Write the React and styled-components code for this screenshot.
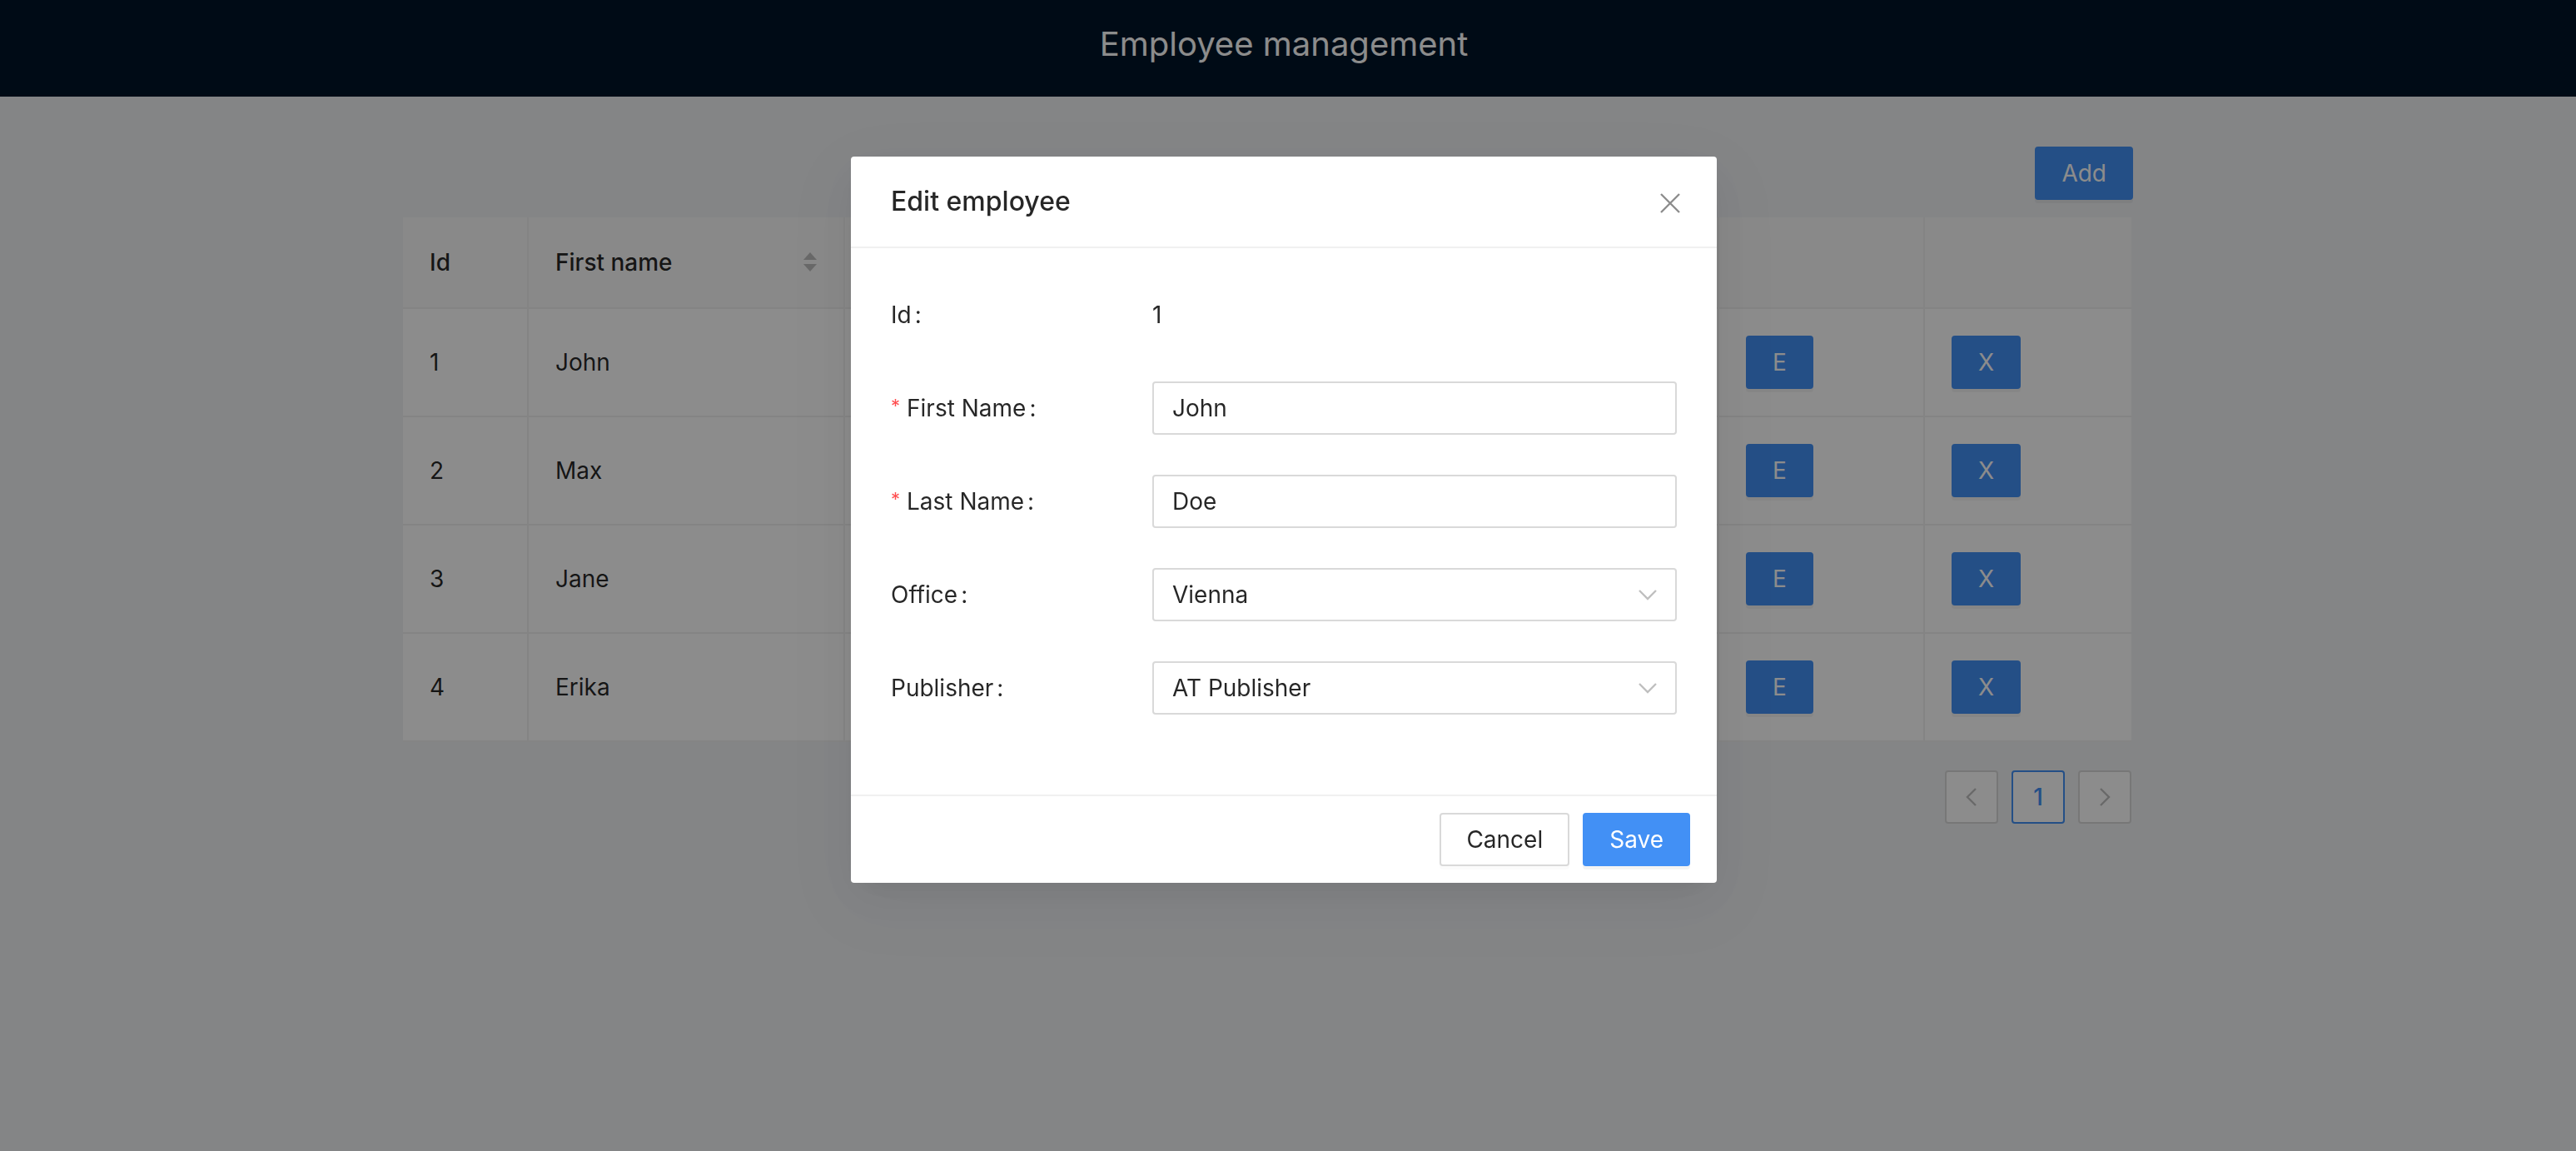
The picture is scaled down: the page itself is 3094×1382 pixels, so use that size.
import styled, { createGlobalStyle } from "styled-components";

const GlobalStyle = createGlobalStyle`
  html, body {
    margin: 0;
    padding: 0;
  }
  body {
    font-family: Inter, "Noto Sans", sans-serif;
    font-size: 28px;
    line-height: 44px;
    color: rgba(0, 0, 0, 0.85);
    background: #f0f2f5;
  }
  * {
    box-sizing: border-box;
  }
`;

const PRIMARY = "#4290f5";

const Header = styled.header`
  height: 116px;
  background: #001529;
  display: flex;
  align-items: center;
  justify-content: center;
  padding: 0 10px 10px 0;
`;

const Title = styled.h1`
  margin: 0;
  color: #fff;
  font-weight: 400;
  font-size: 40px;
  line-height: 1.2;
`;

const Content = styled.main`
  width: 2076px;
  margin-left: 484px;
  padding-top: 60px;
`;

const Toolbar = styled.div`
  display: flex;
  justify-content: flex-end;
  margin: 0 -2px 21px 0;
`;

const Button = styled.button`
  height: 64px;
  padding: 0 30px;
  font-family: inherit;
  font-size: 28px;
  line-height: 44px;
  border-radius: 4px;
  border: 2px solid ${(p) => (p.$primary ? PRIMARY : "#d9d9d9")};
  background: ${(p) => (p.$primary ? PRIMARY : "#fff")};
  color: ${(p) => (p.$primary ? "#fff" : "rgba(0, 0, 0, 0.85)")};
  box-shadow: 0 4px 0 rgba(0, 0, 0, ${(p) => (p.$primary ? 0.045 : 0.015)});
  cursor: pointer;
`;

const Table = styled.table`
  width: 100%;
  table-layout: fixed;
  border-collapse: separate;
  border-spacing: 0;
  background: #fff;
`;

const Th = styled.th`
  background: #fafafa;
  font-weight: 500;
  text-align: left;
  padding: 32px;
  border-right: 2px solid #f0f0f0;
  border-bottom: 2px solid #f0f0f0;
  &:last-child {
    border-right: none;
  }
`;

const Td = styled.td`
  height: 130px;
  padding: 32px;
  vertical-align: middle;
  border-right: 2px solid #f0f0f0;
  border-bottom: 2px solid #f0f0f0;
  &:last-child {
    border-right: none;
  }
`;

const SortCell = styled.div`
  display: flex;
  align-items: center;
  justify-content: space-between;
`;

const Pager = styled.ul`
  list-style: none;
  display: flex;
  justify-content: flex-end;
  gap: 16px;
  margin: 34px 0 0;
  padding: 0;
`;

const PageItem = styled.li`
  width: 64px;
  height: 64px;
  display: flex;
  align-items: center;
  justify-content: center;
  border: 2px solid ${(p) => (p.$active ? PRIMARY : "#d9d9d9")};
  border-radius: 4px;
  background: #fff;
  color: ${(p) => (p.$active ? PRIMARY : "rgba(0, 0, 0, 0.25)")};
  font-weight: ${(p) => (p.$active ? 500 : 400)};
`;

const Overlay = styled.div`
  position: fixed;
  inset: 0;
  background: rgba(0, 0, 0, 0.45);
`;

const ModalWrap = styled.div`
  position: fixed;
  inset: 0;
  padding-right: 10px;
  overflow: auto;
`;

const Modal = styled.div`
  position: relative;
  width: 1040px;
  margin: 188px auto 0;
  background: #fff;
  border-radius: 4px;
  box-shadow: 0 12px 32px -16px rgba(0, 0, 0, 0.08),
    0 18px 56px 0 rgba(0, 0, 0, 0.05), 0 24px 96px 32px rgba(0, 0, 0, 0.03);
`;

const ModalHeader = styled.div`
  padding: 32px 48px;
  border-bottom: 2px solid #f0f0f0;
`;

const ModalTitle = styled.div`
  font-size: 32px;
  line-height: 44px;
  font-weight: 500;
`;

const Close = styled.button`
  position: absolute;
  top: 0;
  right: 0;
  width: 112px;
  height: 112px;
  display: flex;
  align-items: center;
  justify-content: center;
  border: none;
  background: transparent;
  padding: 0;
  cursor: pointer;
`;

const ModalBody = styled.div`
  padding: 48px;
`;

const FormItem = styled.div`
  display: grid;
  grid-template-columns: 314px 1fr;
  align-items: center;
  margin-bottom: 48px;
`;

const Label = styled.label`
  display: flex;
  align-items: center;
  height: 64px;
  white-space: nowrap;
  &::after {
    content: ":";
    margin: 0 16px 0 4px;
  }
`;

const Required = styled.span`
  color: #ff4d4f;
  font-size: 22px;
  line-height: 1;
  margin-right: 8px;
  align-self: flex-start;
  margin-top: 18px;
`;

const Value = styled.div`
  line-height: 64px;
`;

const Input = styled.input`
  width: 100%;
  height: 64px;
  padding: 0 22px;
  border: 2px solid #d9d9d9;
  border-radius: 4px;
  font-family: inherit;
  font-size: 28px;
  color: rgba(0, 0, 0, 0.85);
  background: #fff;
  outline: none;
`;

const Select = styled.div`
  height: 64px;
  padding: 0 22px;
  border: 2px solid #d9d9d9;
  border-radius: 4px;
  display: flex;
  align-items: center;
  justify-content: space-between;
  background: #fff;
`;

const ModalFooter = styled.div`
  border-top: 2px solid #f0f0f0;
  padding: 20px 32px;
  display: flex;
  justify-content: flex-end;
  gap: 16px;
`;

// only the columns left and right of the dialog are visible
const employees = [
  { id: 1, first: "John" },
  { id: 2, first: "Max" },
  { id: 3, first: "Jane" },
  { id: 4, first: "Erika" },
];

function SortIcon() {
  return (
    <svg width="16" height="26" viewBox="0 0 16 26">
      <polygon points="0,10 8,1 16,10" fill="#bfbfbf" />
      <polygon points="0,15 16,15 8,24" fill="#bfbfbf" />
    </svg>
  );
}

function Chevron({ dir = "down", color = "#bfbfbf" }) {
  const points = {
    down: "1,2 11,12 21,2",
    left: "12,1 2,11 12,21",
    right: "2,1 12,11 2,21",
  }[dir];
  const size = dir === "down" ? [22, 14] : [14, 22];
  return (
    <svg width={size[0]} height={size[1]} viewBox={`0 0 ${size[0]} ${size[1]}`}>
      <polyline points={points} fill="none" stroke={color} strokeWidth="2.4" />
    </svg>
  );
}

export default function App() {
  return (
    <>
      <GlobalStyle />
      <Header>
        <Title>Employee management</Title>
      </Header>
      <Content>
        <Toolbar>
          <Button $primary>Add</Button>
        </Toolbar>
        <Table>
          <colgroup>
            <col style={{ width: 151 }} />
            <col style={{ width: 380 }} />
            <col style={{ width: 1050 }} />
            <col style={{ width: 247 }} />
            <col style={{ width: 248 }} />
          </colgroup>
          <thead>
            <tr>
              <Th>Id</Th>
              <Th>
                <SortCell>
                  First name
                  <SortIcon />
                </SortCell>
              </Th>
              <Th></Th>
              <Th></Th>
              <Th></Th>
            </tr>
          </thead>
          <tbody>
            {employees.map((e) => (
              <tr key={e.id}>
                <Td>{e.id}</Td>
                <Td>{e.first}</Td>
                <Td></Td>
                <Td>
                  <Button $primary>E</Button>
                </Td>
                <Td>
                  <Button $primary>X</Button>
                </Td>
              </tr>
            ))}
          </tbody>
        </Table>
        <Pager>
          <PageItem>
            <Chevron dir="left" color="rgba(0,0,0,0.25)" />
          </PageItem>
          <PageItem $active>1</PageItem>
          <PageItem>
            <Chevron dir="right" color="rgba(0,0,0,0.25)" />
          </PageItem>
        </Pager>
      </Content>

      <Overlay />
      <ModalWrap>
        <Modal>
          <ModalHeader>
            <ModalTitle>Edit employee</ModalTitle>
          </ModalHeader>
          <Close aria-label="Close">
            <svg width="24" height="24" viewBox="0 0 24 24">
              <path d="M1 1 L23 23 M23 1 L1 23" stroke="rgba(0,0,0,0.45)" strokeWidth="2.4" />
            </svg>
          </Close>
          <ModalBody>
            <FormItem>
              <Label>Id</Label>
              <Value>1</Value>
            </FormItem>
            <FormItem>
              <Label>
                <Required>*</Required>First Name
              </Label>
              <Input defaultValue="John" />
            </FormItem>
            <FormItem>
              <Label>
                <Required>*</Required>Last Name
              </Label>
              <Input defaultValue="Doe" />
            </FormItem>
            <FormItem>
              <Label>Office</Label>
              <Select>
                Vienna
                <Chevron />
              </Select>
            </FormItem>
            <FormItem>
              <Label>Publisher</Label>
              <Select>
                AT Publisher
                <Chevron />
              </Select>
            </FormItem>
          </ModalBody>
          <ModalFooter>
            <Button>Cancel</Button>
            <Button $primary>Save</Button>
          </ModalFooter>
        </Modal>
      </ModalWrap>
    </>
  );
}
